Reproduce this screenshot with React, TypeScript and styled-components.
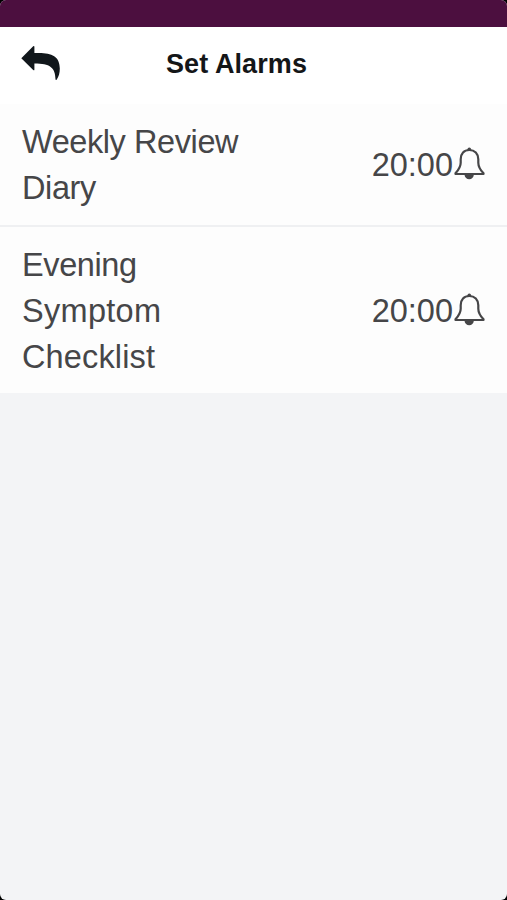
import React from "react";
import styled, { createGlobalStyle } from "styled-components";

const GlobalStyle = createGlobalStyle`
  html, body { margin: 0; background: #000; }
  * { box-sizing: border-box; }
`;

const Screen = styled.div`
  width: 507px;
  height: 900px;
  display: flex;
  flex-direction: column;
  overflow: hidden;
  border-radius: 6px;
  background: #f3f4f6;
  font-family: "Liberation Sans", Arial, sans-serif;
`;

const StatusBar = styled.div`
  flex: none;
  height: 27px;
  background: #4c0f3f;
`;

const Header = styled.header`
  flex: none;
  height: 77px;
  display: grid;
  grid-template-columns: 166px 1fr;
  align-items: center;
  padding-bottom: 4px;
  background: #fff;
`;

const BackButton = styled.button`
  display: flex;
  padding: 0 0 0 21px;
  border: 0;
  background: none;
`;

const Title = styled.h1`
  margin: 0;
  color: #141618;
  font-size: 27px;
  line-height: 32px;
  font-weight: 700;
  letter-spacing: 0.1px;
  white-space: nowrap;
`;

const AlarmList = styled.ul`
  flex: none;
  margin: 0;
  padding: 0;
  list-style: none;
`;

const AlarmRow = styled.li`
  display: flex;
  align-items: center;
  justify-content: space-between;
  padding: 15px 22px 14px 22px;
  background: #fdfdfd;
  color: #464648;
  font-size: 32.5px;
  line-height: 46px;

  & + & {
    border-top: 2px solid #eff0f2;
    padding: 15px 22px 13px 22px;
  }
`;

const Name = styled.span`
  display: flex;
  flex-direction: column;
`;

const Line = styled.span<{ $tracking: number }>`
  letter-spacing: ${(p) => p.$tracking}px;
  white-space: nowrap;
`;

const Time = styled.span`
  display: flex;
  align-items: center;
  gap: 1px;
  padding-bottom: 1px;

  svg {
    margin-bottom: 2px;
  }
`;

const BackIcon = () => (
  <svg width="40" height="35" viewBox="0 0 40 35" aria-hidden="true">
    <path
      d="M.3 12.3 12.2.3q1.2-.8 1.2.7v6C29 6.2 38.8 9 38.8 22.5c0 4.5-1 8.2-3.2 11.2q-1 .8-1.1-.5C34.2 21.5 29 17.6 13.4 17.6v5.8q0 1.5-1.2.6Z"
      fill="#11171b"
    />
  </svg>
);

const BellIcon = () => (
  <svg width="31" height="33" viewBox="0 0 31 33" fill="none" aria-hidden="true">
    <path d="M10.5 27.7h9.4c-.5 2.8-2.2 4.5-4.7 4.5s-4.3-1.7-4.7-4.5Z" fill="#464648" />
    <circle cx="15.3" cy="2.2" r="1.8" fill="#464648" />
    <path
      d="M15.3 3c-5.3 0-8.6 3.6-8.6 9.3v3.4c0 4.6-2 7-5.2 10.6v.7h28v-.7c-3.4-3.6-5.2-6-5.2-10.6v-3.4C24.3 6.6 20.7 3 15.3 3Z"
      stroke="#464648"
      strokeWidth="2.2"
      strokeLinejoin="round"
    />
  </svg>
);

const alarms = [
  {
    time: "20:00",
    lines: [
      { text: "Weekly Review", tracking: -0.42 },
      { text: "Diary", tracking: -0.4 },
    ],
  },
  {
    time: "20:00",
    lines: [
      { text: "Evening", tracking: -0.4 },
      { text: "Symptom", tracking: 0.3 },
      { text: "Checklist", tracking: 0.15 },
    ],
  },
];

export default function App() {
  return (
    <>
      <GlobalStyle />
      <Screen>
        <StatusBar />
        <Header>
          <BackButton aria-label="Back">
            <BackIcon />
          </BackButton>
          <Title>Set Alarms</Title>
        </Header>
        <AlarmList>
          {alarms.map((alarm) => (
            <AlarmRow key={alarm.lines[0].text}>
              <Name>
                {alarm.lines.map((line) => (
                  <Line key={line.text} $tracking={line.tracking}>
                    {line.text}
                  </Line>
                ))}
              </Name>
              <Time>
                {alarm.time}
                <BellIcon />
              </Time>
            </AlarmRow>
          ))}
        </AlarmList>
      </Screen>
    </>
  );
}
